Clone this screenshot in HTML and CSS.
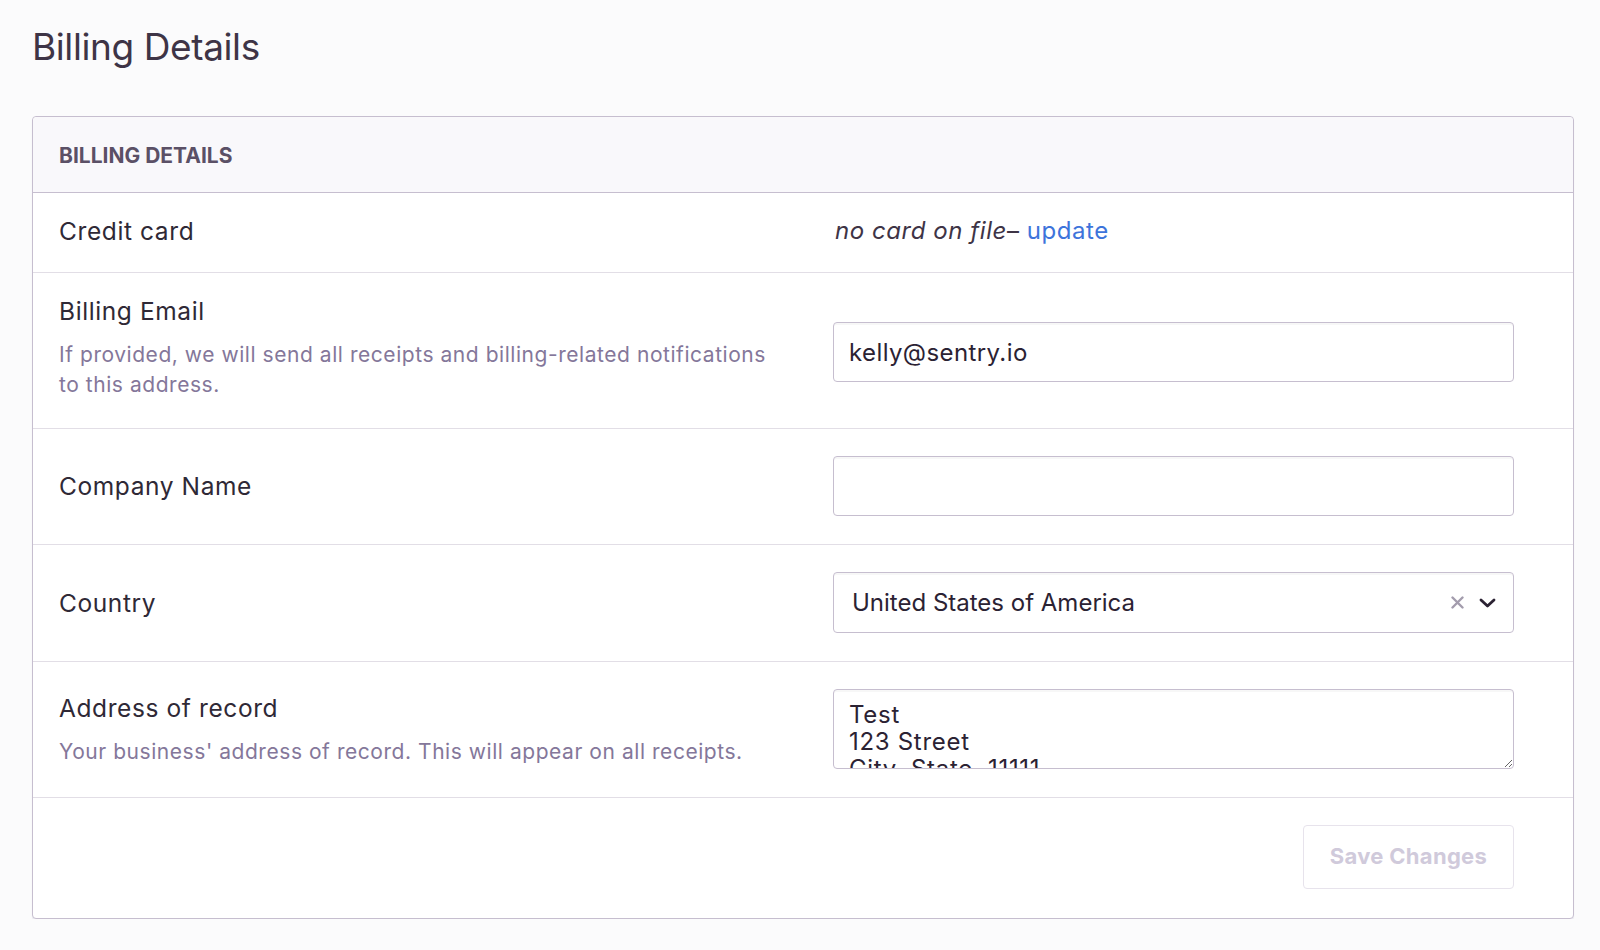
FILE: index.html
```html
<!DOCTYPE html>
<html lang="en">
<head>
<meta charset="utf-8">
<title>Billing Details</title>
<link rel="stylesheet" href="styles.css">
</head>
<body>
<main class="page">
  <h1 class="page-title">Billing Details</h1>
  <section class="panel">
    <header class="panel-header">Billing Details</header>
    <div class="row row-compact">
      <div class="field-label">
        <div class="label-title">Credit card</div>
      </div>
      <div class="field-control">
        <span class="card-value"><em>no card on file</em>– <a class="link" href="#">update</a></span>
      </div>
    </div>
    <div class="row row-email">
      <div class="field-label">
        <div class="label-title">Billing Email</div>
        <div class="label-help">If provided, we will send all receipts and billing-related notifications to this address.</div>
      </div>
      <div class="field-control control-offset">
        <input class="input" type="text" value="kelly@sentry.io">
      </div>
    </div>
    <div class="row">
      <div class="field-label">
        <div class="label-title">Company Name</div>
      </div>
      <div class="field-control">
        <input class="input" type="text" value="">
      </div>
    </div>
    <div class="row">
      <div class="field-label">
        <div class="label-title">Country</div>
      </div>
      <div class="field-control">
        <div class="select">
          <span class="select-value">United States of America</span>
          <span class="select-icons">
            <svg class="icon-clear" width="13" height="13" viewBox="0 0 13 13" aria-hidden="true"><path d="M1.5 1.5 L11.5 11.5 M11.5 1.5 L1.5 11.5" stroke="#a39cad" stroke-width="2.4" stroke-linecap="round" fill="none"/></svg>
            <svg class="icon-chevron" width="17" height="10" viewBox="0 0 17 10" aria-hidden="true"><path d="M2 2 L8.5 8 L15 2" stroke="#2b2233" stroke-width="2.8" stroke-linecap="round" stroke-linejoin="round" fill="none"/></svg>
          </span>
        </div>
      </div>
    </div>
    <div class="row">
      <div class="field-label">
        <div class="label-title">Address of record</div>
        <div class="label-help">Your business' address of record. This will appear on all receipts.</div>
      </div>
      <div class="field-control">
        <textarea class="textarea">Test
123 Street
City, State, 11111</textarea>
      </div>
    </div>
    <footer class="panel-footer">
      <button class="btn" type="button" disabled>Save Changes</button>
    </footer>
  </section>
</main>
</body>
</html>
```
FILE: styles.css
```css
* { box-sizing: border-box; }

html, body {
  margin: 0;
  padding: 0;
  background: #fbfbfc;
}

body {
  font-family: Inter, "Noto Sans", "Liberation Sans", sans-serif;
  color: #2f2936;
}

.page {
  padding: 25px 26px 0 32px;
}

.page-title {
  margin: 0 0 47px 0;
  font-size: 37px;
  line-height: 44px;
  font-weight: 400;
  letter-spacing: -0.4px;
  color: #3e3446;
}

.panel {
  background: #fff;
  border: 1px solid #c6becf;
  border-radius: 4px;
  box-shadow: 0 2px 1px rgba(80, 60, 110, 0.08);
}

.panel-header {
  height: 76px;
  display: flex;
  align-items: center;
  padding: 1px 0 0 26px;
  background: #f9f8fb;
  border-bottom: 1px solid #c6becf;
  border-radius: 4px 4px 0 0;
  text-transform: uppercase;
  font-weight: 700;
  font-size: 21px;
  color: #5b5066;
}

.row {
  display: flex;
  align-items: center;
  padding: 27px 59px 28px 26px;
  border-bottom: 1px solid #e2dee6;
}

.row-compact {
  padding-top: 21px;
  padding-bottom: 24px;
}

.row-email {
  align-items: flex-start;
  padding-top: 21px;
  padding-bottom: 28px;
}

.control-offset {
  margin-top: 28px;
}

.field-label {
  flex: 1;
  min-width: 0;
  padding-right: 52px;
}

.field-control {
  width: 681px;
  flex: none;
}

.label-title {
  font-size: 24.5px;
  line-height: 34px;
  letter-spacing: 0.6px;
  color: #2f2936;
}

.label-help {
  margin-top: 12px;
  font-size: 21px;
  line-height: 30px;
  letter-spacing: 0.55px;
  color: #84779a;
}

.card-value {
  display: block;
  padding-left: 2px;
  font-size: 24px;
  line-height: 34px;
  letter-spacing: 0.55px;
  color: #3e3446;
}

.card-value em {
  font-style: italic;
}

.link {
  color: #3d74db;
  text-decoration: none;
}

.input {
  display: block;
  width: 100%;
  height: 60px;
  margin: 0;
  padding: 0 15px;
  border: 1px solid #c6becf;
  border-radius: 4px;
  background: #fff;
  box-shadow: inset 0 2px 0 rgba(0, 0, 0, 0.03);
  font-family: inherit;
  font-size: 24px;
  letter-spacing: 0.4px;
  color: #2b2233;
  outline: none;
}

.select {
  display: flex;
  align-items: center;
  height: 61px;
  padding: 0 17px 0 18px;
  border: 1px solid #c6becf;
  border-radius: 4px;
  background: #fff;
  box-shadow: inset 0 2px 0 rgba(0, 0, 0, 0.03);
  font-size: 24px;
  color: #2b2233;
}

.select-value {
  flex: 1;
}

.select-icons {
  display: flex;
  align-items: center;
  gap: 15px;
}

.icon-clear, .icon-chevron {
  display: block;
}

.textarea {
  display: block;
  width: 100%;
  height: 80px;
  margin: 0;
  padding: 11px 15px 0 15px;
  border: 1px solid #c6becf;
  border-radius: 4px;
  background: #fff;
  box-shadow: inset 0 2px 0 rgba(0, 0, 0, 0.03);
  font-family: inherit;
  font-size: 24px;
  line-height: 27px;
  letter-spacing: 0.7px;
  color: #2b2233;
  overflow: hidden;
  resize: vertical;
  outline: none;
}

.panel-footer {
  display: flex;
  justify-content: flex-end;
  padding: 27px 59px 29px 26px;
}

.btn {
  width: 211px;
  height: 64px;
  padding-bottom: 3px;
  border: 1px solid #e7e3ec;
  border-radius: 4px;
  background: #fff;
  font-family: inherit;
  font-size: 22px;
  font-weight: 700;
  letter-spacing: 0.3px;
  color: #d0cadb;
  cursor: default;
}
```
